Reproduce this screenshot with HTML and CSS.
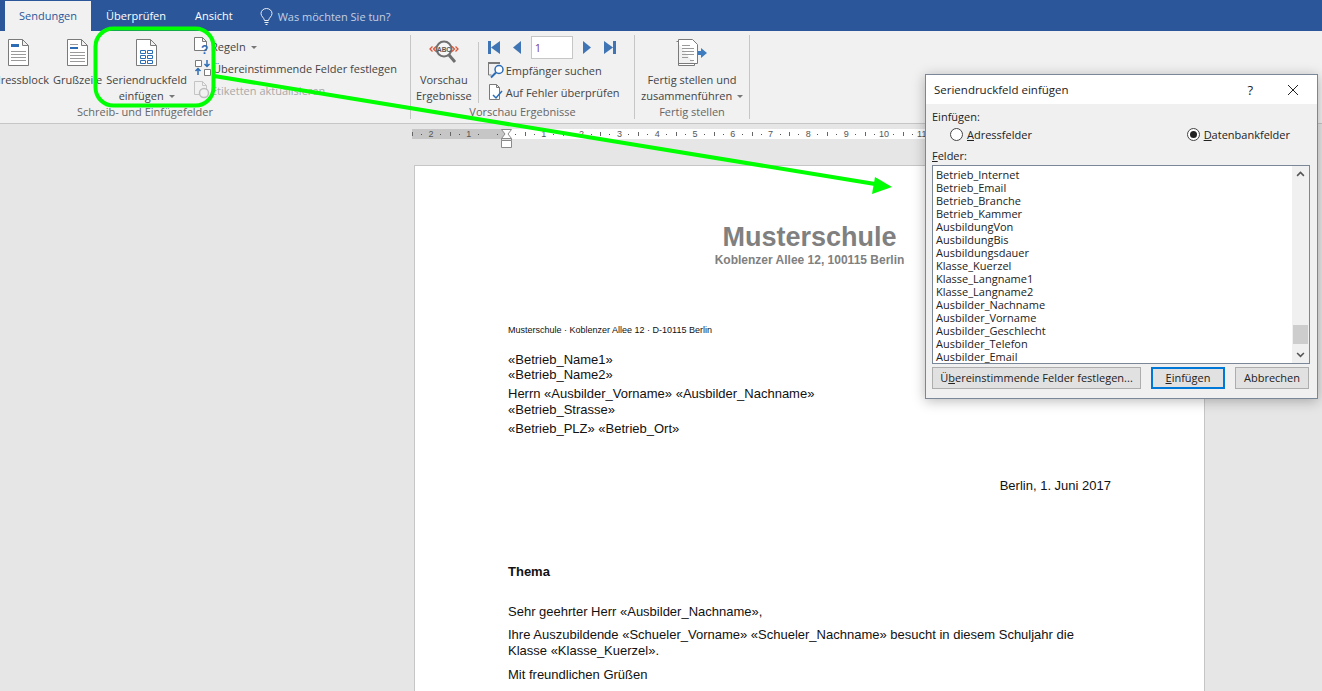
FILE: index.html
```html
<!DOCTYPE html>
<html>
<head>
	<meta charset="utf-8">
	<title>Seriendruckfeld einfügen</title>
	<link rel="stylesheet" href="styles.css">
</head>
<body>
<div id="app">
	<div class="tabs">
		<div class="tab active">Sendungen</div>
		<div class="tab">Überprüfen</div>
		<div class="tab">Ansicht</div>
		<div class="tell">
			<svg class="bulb" width="13" height="17" viewBox="0 0 13 17"><path d="M4.5 12.5C4 9.500 1 8.500 1 5.500a5.500 5 0 0 1 11 0c0 3-3 4-3.500 7zM4.500 14.500h4M5.500 16.500h2" fill="none" stroke="#fff"/></svg>
			<span>Was möchten Sie tun?</span>
		</div>
	</div>

	<div class="ribbon">
		<div class="group g-write">
			<div class="group-body">
				<div class="big">
					<svg class="ico-big" width="21" height="27" viewBox="0 0 21 27"><path class="doc" d="M.5.500h14l6 6v20H.5zM14.500.500v6h6"/><path fill="#2b6cb5" d="M3 5h8v3H3z"/><path class="line" d="M3 12.500h15M3 15.500h15M3 18.500h15M3 21.500h15"/></svg>
					<div class="lbl">Adressblock</div>
				</div>
				<div class="big">
					<svg class="ico-big" width="21" height="27" viewBox="0 0 21 27"><path class="doc" d="M.5.500h14l6 6v20H.5zM14.500.500v6h6"/><path class="line" d="M3 5.500h8"/><path fill="#2b6cb5" d="M3 8h8v2H3z"/><path class="line" d="M3 13.500h15M3 16.500h15M3 19.500h15M3 22.500h15"/></svg>
					<div class="lbl">Grußzeile</div>
				</div>
				<div class="big b-field">
					<svg class="ico-big" width="21" height="27" viewBox="0 0 21 27"><path class="doc" d="M.5.500h14l6 6v20H.5zM14.500.500v6h6"/><path fill="none" stroke="#2b6cb5" d="M4.500 11.500h5v3h-5zM11.500 11.500h5v3h-5zM4.500 16.500h5v3h-5zM11.500 16.500h5v3h-5zM4.500 21.500h5v3h-5zM11.500 21.500h5v3h-5z"/></svg>
					<div class="lbl">Seriendruckfeld<br>einfügen <i class="caret"></i></div>
				</div>
				<div class="small-col">
					<div class="row">
						<svg width="16" height="18" viewBox="0 0 16 18"><path class="doc" d="M.5.500h8l4 4v9H.5zM8.500.500v4h4"/><text class="q" x="7" y="17">?</text></svg>
						<span>Regeln <i class="caret"></i></span>
					</div>
					<div class="row">
						<svg width="18" height="18" viewBox="0 0 18 18"><path class="doc" d="M1.500 1.500h6v6h-6zM10.500 10.500h6v6h-6z"/><path fill="none" stroke="#2b6cb5" stroke-width="1.500" d="M13 1v6M10.500 5l2.500 2.500L15.500 5M4 16v-6M1.500 12L4 9.500 6.500 12"/></svg>
						<span>Übereinstimmende Felder festlegen</span>
					</div>
					<div class="row off">
						<svg width="16" height="18" viewBox="0 0 16 18"><path fill="none" stroke="#c4c4c4" d="M.5.500h8l4 4v9H.5zM8.500.500v4h4"/><circle cx="10" cy="12" r="4.500" fill="#f1f1f1" stroke="#bdbdbd" stroke-width="1.500"/></svg>
						<span>Etiketten aktualisieren</span>
					</div>
				</div>
			</div>
			<div class="group-name">Schreib- und Einfügefelder</div>
		</div>

		<div class="group g-preview">
			<div class="group-body">
				<div class="big b-preview">
					<svg class="ico-big" width="30" height="27" viewBox="0 0 30 27"><circle cx="15" cy="10" r="7.500" fill="#f6f6f6" stroke="#6f6f6f" stroke-width="2"/><path stroke="#6f6f6f" stroke-width="3" d="M20 16l6 7"/><text class="abc" x="15" y="12.500">ABC</text><path fill="none" stroke="#d9573a" stroke-width="1.300" d="M3.500 7.500L1 10l2.500 2.500M7 7.500L4.500 10 7 12.500M26.500 7.500L29 10l-2.500 2.500M23 7.500l2.500 2.500-2.500 2.500"/></svg>
					<div class="lbl">Vorschau<br>Ergebnisse</div>
				</div>
				<div class="inner-sep"></div>
				<div class="small-col">
					<div class="nav">
						<svg width="13" height="13" viewBox="0 0 13 13"><path class="nav-ico" d="M0 0h3v13H0zM12 0v13L3 6.500z"/></svg>
						<svg class="nav-prev" width="9" height="13" viewBox="0 0 9 13"><path class="nav-ico" d="M8 0v13L0 6.500z"/></svg>
						<div class="rec">1</div>
						<svg class="nav-next" width="9" height="13" viewBox="0 0 9 13"><path class="nav-ico" d="M0 0v13l8-6.500z"/></svg>
						<svg class="nav-last" width="13" height="13" viewBox="0 0 13 13"><path class="nav-ico" d="M0 0v13l9-6.500zM9 0h3v13H9z"/></svg>
					</div>
					<div class="row">
						<svg width="17" height="17" viewBox="0 0 17 17"><path fill="#7a7a7a" d="M0 0h12v2H0z"/><path fill="none" stroke="#7a7a7a" d="M.5 2v11h3"/><circle cx="11" cy="7.500" r="4" fill="#fff" stroke="#2b6cb5" stroke-width="1.500"/><path stroke="#2b6cb5" stroke-width="2" d="M8 10.500l-5 5"/></svg>
						<span>Empfänger suchen</span>
					</div>
					<div class="row">
						<svg width="17" height="17" viewBox="0 0 17 17"><path class="doc" d="M1.500.500h7l3 3v12h-10zM8.500.500v3h3"/><path fill="none" stroke="#2b6cb5" stroke-width="1.500" d="M5 11l3 3 6-7"/></svg>
						<span>Auf Fehler überprüfen</span>
					</div>
				</div>
			</div>
			<div class="group-name">Vorschau Ergebnisse</div>
		</div>

		<div class="group g-finish">
			<div class="group-body">
				<div class="big">
					<svg class="ico-big" width="32" height="27" viewBox="0 0 32 27"><path class="doc" d="M.5 2.500h2v24h16v-2M2.500.500h14l5 5v19h-19z"/><path class="line" d="M6 6.500h8M6 9.500h12M6 12.500h12M6 15.500h12M6 18.500h6M14 21.500h4"/><path fill="#3f7cbf" d="M22 12h3v-3l6 5-6 5v-3h-3z"/></svg>
					<div class="lbl">Fertig stellen und<br>zusammenführen <i class="caret"></i></div>
				</div>
			</div>
			<div class="group-name">Fertig stellen</div>
		</div>
	</div>

	<div class="workspace">
		<div class="ruler">
			<div class="ruler-part off-page">
				<span class="cell">2</span><span class="cell">1</span><span class="half"></span>
			</div>
			<div class="ruler-part">
				<span class="half"></span><span class="cell">1</span><span class="cell">2</span><span class="cell">3</span><span class="cell">4</span><span class="cell">5</span><span class="cell">6</span><span class="cell">7</span><span class="cell">8</span><span class="cell">9</span><span class="cell">10</span><span class="cell">11</span><span class="cell">12</span><span class="cell">13</span><span class="cell">14</span><span class="cell">15</span><span class="cell">16</span><span class="cell">17</span>
			</div>
			<svg class="indent" width="11" height="19" viewBox="0 0 11 19"><path d="M.5.500h10L7 5l3.500 4.500H.5L4 5zM.5 11.500h10v7H.5zM.5 9.500v2M10.500 9.500v2" fill="#fff" stroke="#8a8a8a"/></svg>
		</div>

		<div class="page">
			<div class="letterhead">
				<div class="school">Musterschule</div>
				<div class="addr">Koblenzer Allee 12, 100115 Berlin</div>
			</div>
			<p class="sender">Musterschule · Koblenzer Allee 12 · D-10115 Berlin</p>
			<p class="a1">«Betrieb_Name1»</p>
			<p class="a2">«Betrieb_Name2»</p>
			<p class="a3">Herrn «Ausbilder_Vorname» «Ausbilder_Nachname»</p>
			<p class="a4">«Betrieb_Strasse»</p>
			<p class="a5">«Betrieb_PLZ» «Betrieb_Ort»</p>
			<p class="date">Berlin, 1. Juni 2017</p>
			<p class="subject">Thema</p>
			<p class="b1">Sehr geehrter Herr «Ausbilder_Nachname»,</p>
			<p class="b2">Ihre Auszubildende «Schueler_Vorname» «Schueler_Nachname» besucht in diesem Schuljahr die Klasse «Klasse_Kuerzel».</p>
			<p class="b3">Mit freundlichen Grüßen</p>
		</div>
	</div>

	<svg class="callout" width="1322" height="691" viewBox="0 0 1322 691">
		<rect x="95.500" y="28.500" width="118" height="77" rx="18" fill="none" stroke="#0f0" stroke-width="4"/>
		<path d="M214 76L875 184" fill="none" stroke="#0f0" stroke-width="4"/>
		<path d="M892 187L872 194 875 177z" fill="#0f0"/>
	</svg>

	<div class="dialog">
		<div class="dlg-title">
			<span class="dlg-name">Seriendruckfeld einfügen</span>
			<span class="dlg-help">?</span>
			<svg width="12" height="12" viewBox="0 0 12 12"><path d="M1 1l10 10M11 1L1 11" stroke="#222" fill="none"/></svg>
		</div>
		<div class="dlg-body">
			<div class="dlg-label lbl-ins">Einfügen:</div>
			<div class="radios">
				<div class="radio"><i class="dot-o"></i><span><u>A</u>dressfelder</span></div>
				<div class="radio"><i class="dot-o on"></i><span><u>D</u>atenbankfelder</span></div>
			</div>
			<div class="dlg-label lbl-fields"><u>F</u>elder:</div>
			<div class="listbox">
				<ul>
					<li>Betrieb_Internet</li>
					<li>Betrieb_Email</li>
					<li>Betrieb_Branche</li>
					<li>Betrieb_Kammer</li>
					<li>AusbildungVon</li>
					<li>AusbildungBis</li>
					<li>Ausbildungsdauer</li>
					<li>Klasse_Kuerzel</li>
					<li>Klasse_Langname1</li>
					<li>Klasse_Langname2</li>
					<li>Ausbilder_Nachname</li>
					<li>Ausbilder_Vorname</li>
					<li>Ausbilder_Geschlecht</li>
					<li>Ausbilder_Telefon</li>
					<li>Ausbilder_Email</li>
				</ul>
				<div class="scroll">
					<svg width="9" height="6" viewBox="0 0 9 6"><path d="M1 5l3.500-3.500L8 5" fill="none" stroke="#555" stroke-width="1.600"/></svg>
					<div class="thumb"></div>
					<svg width="9" height="6" viewBox="0 0 9 6"><path d="M1 1l3.500 3.500L8 1" fill="none" stroke="#555" stroke-width="1.600"/></svg>
				</div>
			</div>
			<div class="buttons">
				<div class="btn b-match">Ü<u>b</u>ereinstimmende Felder festlegen...</div>
				<div class="btn b-ins"><u>E</u>infügen</div>
				<div class="btn b-cancel">Abbrechen</div>
			</div>
		</div>
	</div>
</div>
</body>
</html>
```

FILE: styles.css
```css
html, body{
	margin: 0;
	padding: 0;
	height: 100%;
	overflow: hidden;
}
body{
	font-family: "Open Sans", "Noto Sans", sans-serif;
	font-size: 11px;
	color: #444;
}
#app{
	width: 1322px;
	height: 691px;
	position: relative;
	overflow: hidden;
	display: flex;
	flex-direction: column;
	background: #e6e6e6;
}

/* title tabs */
.tabs{
	height: 30px;
	padding: 1px 0 0 5px;
	background: #2b579a;
	display: flex;
	color: #fff;
	flex: none;
}
.tab{
	line-height: 30px;
	padding: 0 15px;
	margin-right: 0;
}
.tab.active{
	width: 86px;
	padding: 0;
	margin-right: 15px;
	text-align: center;
	background: #f1f1f1;
	color: #2b579a;
}
.tab:nth-child(2){
	padding: 0 29px 0 0;
}
.tab:nth-child(3){
	padding: 0 27px 0 0;
}
.tell{
	display: flex;
	align-items: center;
	gap: 5px;
	color: #c3cfe2;
}
.bulb{
	opacity: .9;
}

/* ribbon */
.ribbon{
	height: 92px;
	flex: none;
	background: #f1f1f1;
	border-bottom: 1px solid #c6c6c6;
	display: flex;
	overflow: hidden;
	box-sizing: content-box;
}
.group{
	flex: none;
	height: 84px;
	margin-top: 4px;
	border-right: 1px solid #c6c6c6;
	display: flex;
	flex-direction: column;
	box-sizing: border-box;
}
.group-body{
	height: 69px;
	display: flex;
}
.group-name{
	text-align: center;
	color: #666;
	line-height: 14px;
	margin-top: 1px;
}
.g-write{
	width: 531px;
	margin-left: -120px;
}
.g-write .group-body{
	justify-content: flex-end;
}
.g-preview{
	width: 224px;
}
.g-finish{
	width: 115px;
}
.big{
	display: flex;
	flex-direction: column;
	align-items: center;
	padding: 0 2px;
	white-space: nowrap;
}
.ico-big{
	display: block;
	margin-top: 4px;
	height: 27px;
	flex: none;
}
.lbl{
	text-align: center;
	line-height: 16px;
	margin-top: 6px;
}
.b-field{
	margin-right: 5px;
}
.b-preview{
	width: 61px;
	margin-left: 3px;
	box-sizing: border-box;
}
.g-finish .big{
	width: 115px;
	box-sizing: border-box;
}
.caret{
	display: inline-block;
	width: 0;
	height: 0;
	margin: 0 0 2px 2px;
	border: 3px solid transparent;
	border-top-color: #777;
	border-bottom: 0;
}
.small-col{
	display: flex;
	flex-direction: column;
	width: 208px;
}
.g-write .small-col{
	width: 216px;
}
.row{
	height: 22px;
	display: flex;
	align-items: center;
	gap: 1px;
	white-space: nowrap;
}
.row svg{
	flex: none;
}
.off{
	color: #a8a8a8;
}
.doc{
	fill: #fff;
	stroke: #7a7a7a;
}
.line{
	fill: none;
	stroke: #9a9a9a;
}
.q{
	font-family: "Liberation Sans", sans-serif;
	font-size: 12px;
	font-weight: bold;
	fill: #2b6cb5;
}
.abc{
	font-family: "Liberation Sans", sans-serif;
	font-size: 6.500px;
	font-weight: bold;
	fill: #555;
	text-anchor: middle;
}
.inner-sep{
	width: 1px;
	height: 61px;
	margin: 7px 9px 0 4px;
	background: #c6c6c6;
	flex: none;
}
.nav{
	height: 24px;
	display: flex;
	align-items: center;
	gap: 0;
}
.nav-ico{
	fill: #3f74b5;
}
.nav-prev{
	margin-left: 12px;
}
.rec{
	width: 40px;
	height: 21px;
	margin: 0 10px 0 9px;
	padding-left: 3px;
	background: #fff;
	border: 1px solid #c6c6c6;
	line-height: 21px;
	color: #7a3a8a;
	box-sizing: content-box;
	width: 37px;
}
.nav-last{
	margin-left: 12px;
}

/* ruler and document */
.workspace{
	flex: 1;
	padding-top: 5px;
	min-height: 0;
}
.ruler{
	height: 10px;
	margin-left: 412px;
	width: 793px;
	display: flex;
	position: relative;
	font-family: "Liberation Sans", sans-serif;
	font-size: 9px;
	line-height: 10px;
	color: #555;
}
.ruler-part{
	display: flex;
	background: #fff;
	flex: 1;
	overflow: hidden;
}
.ruler-part.off-page{
	background: #c6c6c6;
	flex: none;
	width: 94px;
}
.cell, .half{
	flex: none;
	text-align: center;
	background-image:
		linear-gradient(#555, #555),
		linear-gradient(#555, #555),
		linear-gradient(#666, #666);
	background-repeat: no-repeat;
}
.cell{
	width: 37.800px;
	background-size: 1px 1px, 1px 1px, 1px 4px;
	background-position: 9px 5px, 28px 5px, 0 3px;
}
.half{
	width: 18.900px;
	background-size: 1px 1px, 0 0, 0 0;
	background-position: 9px 5px, 0 0, 0 0;
}
.indent{
	position: absolute;
	left: 89px;
	top: 0;
}
.page{
	width: 791px;
	height: 600px;
	margin: 26px 0 0 414px;
	padding: 0 93px 0 93px;
	box-sizing: border-box;
	background: #fff;
	border: 1px solid #c6c6c6;
	font-family: "Liberation Sans", Arial, sans-serif;
	font-size: 13px;
	line-height: 15px;
	color: #111;
}
.page p{
	margin: 0;
}
.letterhead{
	padding-top: 55px;
	text-align: center;
	color: #808080;
	font-weight: bold;
}
.school{
	font-size: 27px;
	line-height: 32px;
}
.addr{
	font-size: 12px;
	line-height: 14px;
}
.page .sender{
	margin-top: 58px;
	font-size: 9px;
	line-height: 11px;
}
.page .a1{
	margin-top: 16px;
}
.page .a3{
	margin-top: 4px;
}
.page .a4{
	margin-top: 1px;
}
.page .a5{
	margin-top: 4px;
}
.page .date{
	margin-top: 42px;
	text-align: right;
}
.page .subject{
	margin-top: 71px;
	font-weight: bold;
}
.page .b1{
	margin-top: 25px;
}
.page .b2{
	margin-top: 8px;
	line-height: 16px;
}
.page .b3{
	margin-top: 8px;
}

/* annotation */
.callout{
	position: absolute;
	left: 0;
	top: 0;
}

/* dialog */
.dialog{
	position: absolute;
	left: 925px;
	top: 74px;
	width: 393px;
	height: 325px;
	box-sizing: border-box;
	border: 1px solid #7a8798;
	background: #f0f0f0;
	box-shadow: 0 2px 12px rgba(0,0,0,.28);
	color: #222;
	font-size: 11px;
}
.dlg-title{
	height: 29px;
	padding: 0 18px 0 8px;
	background: #fff;
	display: flex;
	align-items: center;
	font-size: 11.500px;
}
.dlg-name{
	flex: 1;
}
.dlg-help{
	margin-right: 34px;
	font-size: 13px;
}
.dlg-body{
	padding: 6px 7px 0 6px;
}
.dlg-label{
	line-height: 14px;
}
.radios{
	display: flex;
	justify-content: space-between;
	padding: 2px 20px 0 18px;
	height: 17px;
}
.radio{
	display: flex;
	align-items: center;
	gap: 4px;
}
.radio:last-child{
	margin-right: 0;
}
.dot-o{
	width: 11px;
	height: 11px;
	border: 1px solid #444;
	border-radius: 50%;
	background: #fff;
	position: relative;
	display: block;
}
.dot-o.on:after{
	content: "";
	position: absolute;
	left: 2px;
	top: 2px;
	width: 7px;
	height: 7px;
	border-radius: 50%;
	background: #222;
}
.lbl-fields{
	margin-top: 6px;
}
.listbox{
	height: 197px;
	margin-top: 2px;
	background: #fff;
	border: 1px solid #7a8798;
	display: flex;
	box-sizing: content-box;
}
.listbox ul{
	margin: 0;
	padding: 2px 0 0 3px;
	list-style: none;
	flex: 1;
	line-height: 13px;
}
.scroll{
	width: 17px;
	background: #f0f0f0;
	display: flex;
	flex-direction: column;
	align-items: center;
	padding: 5px 0;
	box-sizing: border-box;
}
.thumb{
	width: 15px;
	height: 20px;
	margin: auto 0 8px;
	background: #cdcdcd;
	margin-top: 148px;
}
.buttons{
	display: flex;
	margin-top: 3px;
	gap: 10px;
}
.btn{
	height: 22px;
	line-height: 20px;
	box-sizing: border-box;
	border: 1px solid #adadad;
	background: #e1e1e1;
	text-align: center;
	white-space: nowrap;
}
.b-match{
	width: 209px;
}
.b-ins{
	width: 74px;
	border: 2px solid #0078d7;
	line-height: 18px;
}
.b-cancel{
	width: 74px;
}
```
